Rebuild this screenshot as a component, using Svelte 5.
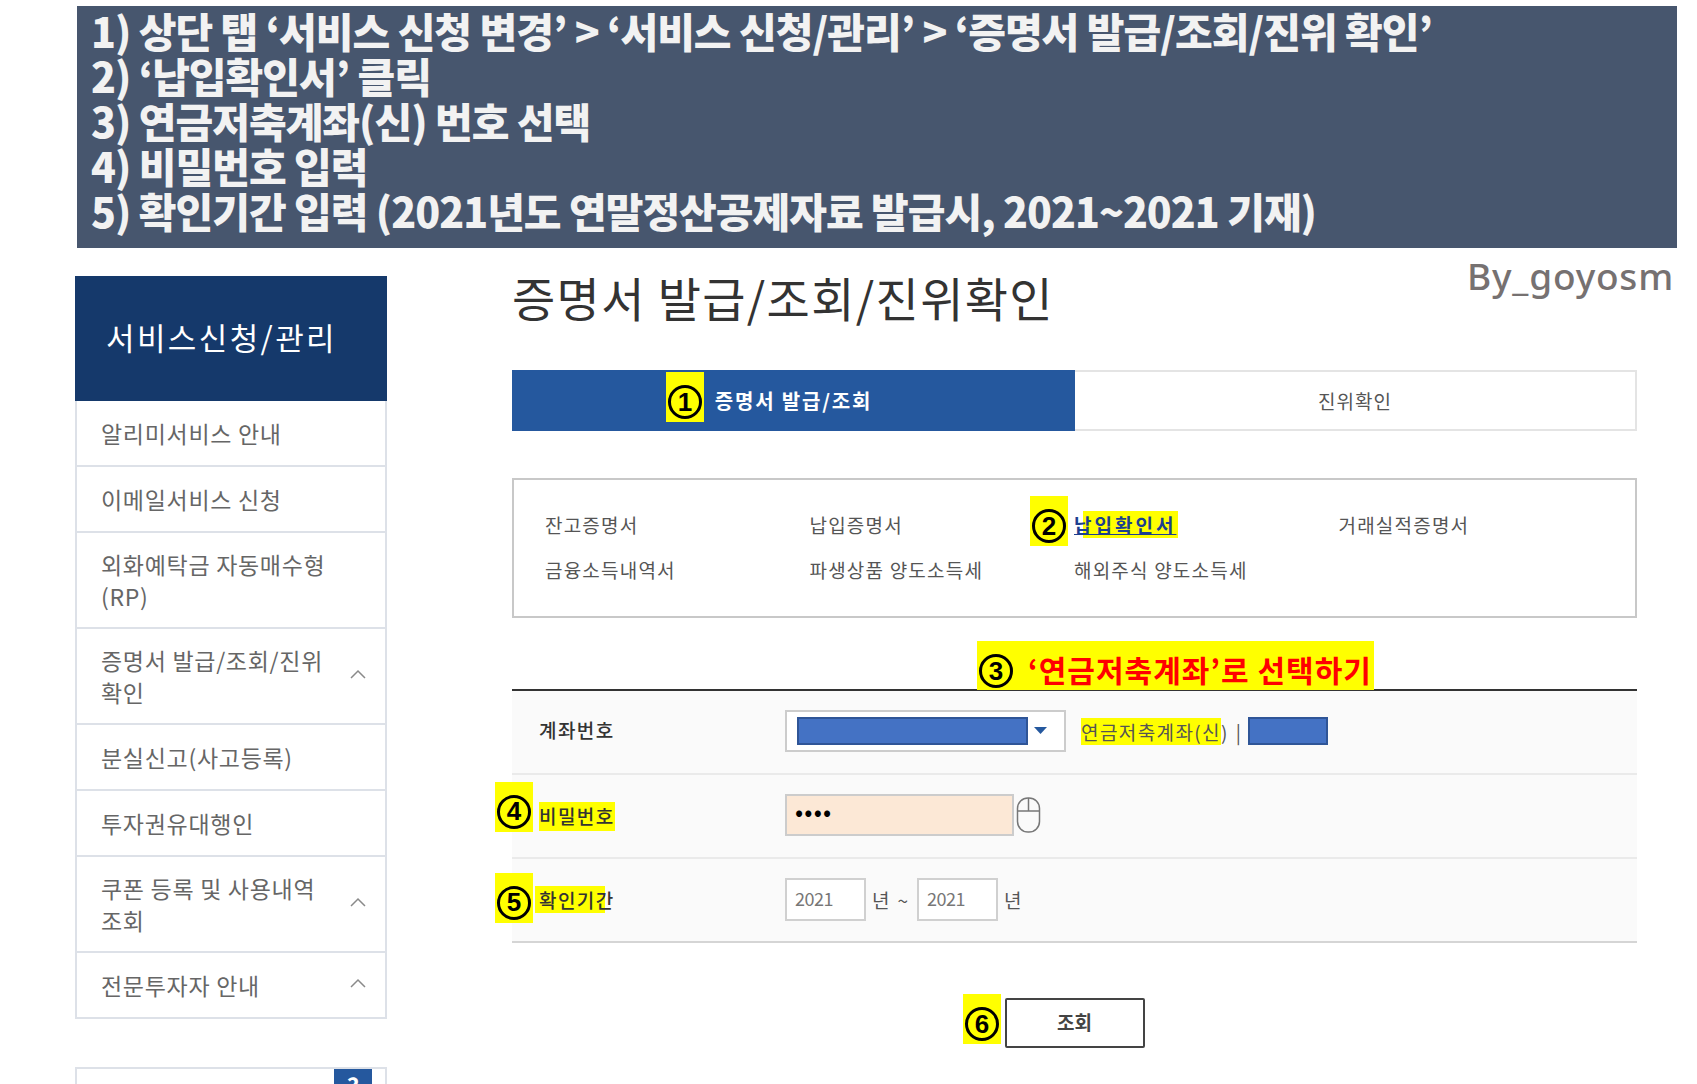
<script>
	const steps = [
		"1) 상단 탭 ‘서비스 신청 변경’ > ‘서비스 신청/관리’ > ‘증명서 발급/조회/진위 확인’",
		"2) ‘납입확인서’ 클릭",
		"3) 연금저축계좌(신) 번호 선택",
		"4) 비밀번호 입력",
		"5) 확인기간 입력 (2021년도 연말정산공제자료 발급시, 2021~2021 기재)"
	];

	const menu = [
		{ label: "알리미서비스 안내" },
		{ label: "이메일서비스 신청" },
		{ label: "외화예탁금 자동매수형 (RP)" },
		{ label: "증명서 발급/조회/진위 확인", open: true },
		{ label: "분실신고(사고등록)" },
		{ label: "투자권유대행인" },
		{ label: "쿠폰 등록 및 사용내역 조회", open: true },
		{ label: "전문투자자 안내", open: true }
	];

	const docs = [
		"잔고증명서",
		"납입증명서",
		"납입확인서",
		"거래실적증명서",
		"금융소득내역서",
		"파생상품 양도소득세",
		"해외주식 양도소득세"
	];
</script>

<div class="page">
	<div class="banner">
		{#each steps as step}
			<div>{step}</div>
		{/each}
	</div>

	<div class="content">
		<aside class="sidebar">
			<h2 class="side-title">서비스신청/관리</h2>
			<ul class="side-menu">
				{#each menu as item}
					<li class="side-item">
						<span class="side-label">{item.label}</span>
						{#if item.open}
							<svg class="chevron" width="16" height="10" viewBox="0 0 16 10">
								<path d="M1 9 L8 2 L15 9" fill="none" stroke="#8a8a8a" stroke-width="1.5" />
							</svg>
						{/if}
					</li>
				{/each}
			</ul>
			<div class="help-box"><span class="help-tab">?</span></div>
		</aside>

		<main class="main">
			<div class="title-row">
				<h1 class="title">증명서 발급/조회/진위확인</h1>
				<span class="credit">By_goyosm</span>
			</div>

			<div class="tabs">
				<div class="tab active">
					<span class="step step-tab"><i>1</i></span>
					<span class="tab-text">증명서 발급/조회</span>
				</div>
				<div class="tab">진위확인</div>
			</div>

			<div class="doc-box">
				{#each docs as doc, i}
					<div class="doc" class:picked={i === 2}>
						{#if i === 2}
							<span class="step step-doc"><i>2</i></span>
							<a href="#top" class="doc-link">{doc}</a>
						{:else}
							{doc}
						{/if}
					</div>
				{/each}
			</div>

			<div class="note">
				<span class="note-num"><i>3</i></span>
				<span class="note-text">‘연금저축계좌’로 선택하기</span>
			</div>

			<div class="form">
				<div class="form-row">
					<div class="form-label acct-label">계좌번호</div>
					<div class="form-field">
						<div class="select">
							<span class="mask mask-wide"></span>
							<svg width="13" height="8" viewBox="0 0 13 8"><path d="M0 0 H13 L6.5 7 Z" fill="#25589e" /></svg>
						</div>
						<span class="acct-name"><mark>연금저축계좌(신</mark>)</span>
						<span class="acct-sep">|</span>
						<span class="mask mask-short"></span>
					</div>
				</div>
				<div class="form-row">
					<div class="form-label">
						<span class="step step-row"><i>4</i></span>
						<mark class="label-mark">비밀번호</mark>
					</div>
					<div class="form-field">
						<div class="password">••••</div>
						<svg class="mouse" width="25" height="36" viewBox="0 0 25 36">
							<rect x="1.5" y="1" width="22" height="34" rx="10.5" fill="none" stroke="#777" stroke-width="1.5" />
							<path d="M1.5 14 H23.5 M12.5 1 V14" fill="none" stroke="#777" stroke-width="1.5" />
						</svg>
					</div>
				</div>
				<div class="form-row">
					<div class="form-label">
						<span class="step step-row step-five"><i>5</i></span>
						<mark class="period-mark">확인기간</mark>
					</div>
					<div class="form-field period">
						<div class="year">2021</div>
						<span class="unit">년</span>
						<span class="tilde">~</span>
						<div class="year">2021</div>
						<span class="unit">년</span>
					</div>
				</div>
			</div>

			<div class="actions">
				<span class="step step-btn"><i>6</i></span>
				<button class="search">조회</button>
			</div>
		</main>
	</div>
</div>

<style>
	:global(body) {
		margin: 0;
		background: #fff;
	}

	.page {
		width: 1697px;
		height: 1084px;
		overflow: hidden;
		padding-top: 6px;
		box-sizing: border-box;
		font-family: "Noto Sans CJK KR", "Noto Sans", sans-serif;
		color: #555;
	}

	.banner {
		margin-left: 77px;
		width: 1600px;
		height: 242px;
		box-sizing: border-box;
		padding: 2px 0 0 14px;
		background: #47566e;
		color: #f2f2f2;
		font-size: 41px;
		font-weight: 900;
		line-height: 45px;
		letter-spacing: -1px;
		white-space: nowrap;
	}

	.content {
		display: flex;
		margin-top: 28px;
		padding-left: 75px;
	}

	.sidebar {
		width: 312px;
		flex: none;
	}

	.side-title {
		margin: 0;
		height: 125px;
		box-sizing: border-box;
		display: flex;
		align-items: center;
		padding: 0 0 4px 31px;
		background: #15396b;
		color: #fff;
		font-size: 31px;
		font-weight: 400;
		letter-spacing: 2.4px;
	}

	.side-menu {
		list-style: none;
		margin: 0;
		padding: 0;
		border: 2px solid #dde1e8;
		border-top: 0;
	}

	.side-item {
		display: flex;
		align-items: center;
		justify-content: space-between;
		box-sizing: border-box;
		min-height: 66px;
		padding: 15px 19px 15px 24px;
		font-size: 23px;
		line-height: 32px;
		letter-spacing: 0.7px;
		color: #666;
		border-bottom: 2px solid #dde1e8;
	}

	.side-item:last-child {
		border-bottom: 0;
		min-height: 64px;
	}

	.side-label {
		max-width: 232px;
	}

	.chevron {
		flex: none;
		margin-bottom: 4px;
	}

	.help-box {
		margin-top: 48px;
		height: 60px;
		border: 2px solid #dde1e8;
		position: relative;
	}

	.help-tab {
		position: absolute;
		left: 257px;
		top: 0;
		width: 38px;
		height: 60px;
		text-align: center;
		background: #25589e;
		color: #fff;
		font-size: 24px;
		font-weight: 700;
		line-height: 34px;
	}

	.main {
		margin-left: 125px;
		width: 1125px;
		flex: none;
		position: relative;
	}

	.title-row {
		height: 94px;
	}

	.title {
		margin: 0;
		font-size: 47px;
		font-weight: 400;
		line-height: 42px;
		letter-spacing: 1.35px;
		color: #333;
	}

	.credit {
		position: absolute;
		top: -20px;
		right: -37px;
		font-family: "Noto Sans", sans-serif;
		font-size: 37px;
		font-weight: 500;
		line-height: 40px;
		letter-spacing: 0.8px;
		color: #767171;
	}

	.tabs {
		display: flex;
		height: 61px;
	}

	.tab {
		flex: 1;
		display: flex;
		align-items: center;
		justify-content: center;
		box-sizing: border-box;
		border: 2px solid #e4e4e4;
		border-left: 0;
		font-size: 19px;
		letter-spacing: 1px;
		color: #555;
	}

	.tab.active {
		flex: none;
		width: 563px;
		border: 0;
		background: #25589e;
		color: #fff;
		font-weight: 700;
		font-size: 20px;
		letter-spacing: 1.8px;
		position: relative;
	}

	.step {
		position: absolute;
		width: 38px;
		height: 50px;
		background: #ff0;
		display: flex;
		align-items: flex-end;
		justify-content: center;
		padding-bottom: 3px;
		box-sizing: border-box;
	}

	.step i,
	.note-num i {
		width: 34px;
		height: 34px;
		box-sizing: border-box;
		border: 3px solid #000;
		border-radius: 50%;
		display: flex;
		align-items: center;
		justify-content: center;
		font-family: "Liberation Sans", sans-serif;
		font-style: normal;
		font-weight: 700;
		font-size: 26px;
		color: #000;
		letter-spacing: 0;
	}

	.step-tab {
		left: 154px;
		top: 2px;
	}

	.doc-box {
		margin-top: 47px;
		height: 140px;
		box-sizing: border-box;
		border: 2px solid #c8c8c8;
		padding: 22px 0 0 31px;
		display: grid;
		grid-template-columns: repeat(4, 264.5px);
		grid-auto-rows: 45px;
		font-size: 19px;
		letter-spacing: 1.2px;
		color: #555;
		align-items: center;
	}

	.doc {
		position: relative;
		white-space: nowrap;
	}

	.doc-link {
		color: #1d3f8f;
		font-weight: 700;
		letter-spacing: 3px;
		text-decoration: underline;
		background: linear-gradient(#ff0, #ff0) no-repeat 9px 0 / 95px 100%;
		padding: 0 2px 0 0;
	}

	.step-doc {
		left: -44px;
		top: -15px;
	}

	.note {
		margin: 23px 0 -1px 465px;
		width: 397px;
		height: 49px;
		background: #ff0;
		display: flex;
		align-items: flex-end;
		gap: 15px;
		padding: 0 0 2px 2px;
		box-sizing: border-box;
		position: relative;
	}

	.note-text {
		font-size: 30px;
		font-weight: 700;
		line-height: 38px;
		color: #f00;
		letter-spacing: 1px;
		white-space: nowrap;
	}

	.form {
		border-top: 2px solid #333;
		border-bottom: 2px solid #d5d5d5;
		background: #fafafa;
	}

	.form-row {
		display: flex;
		align-items: center;
		box-sizing: border-box;
		height: 84px;
		padding-bottom: 2px;
		border-bottom: 2px solid #eaeaea;
	}

	.form-row:last-child {
		border-bottom: 0;
		height: 82px;
	}

	.form-label {
		position: relative;
		width: 273px;
		flex: none;
		box-sizing: border-box;
		padding-left: 27px;
		font-size: 19px;
		font-weight: 500;
		letter-spacing: 1.4px;
		color: #333;
	}

	.acct-label {
		padding-bottom: 4px;
	}

	.label-mark {
		background: #ff0;
		color: #333;
		padding-bottom: 2px;
	}

	.period-mark {
		background: linear-gradient(#ff0, #ff0) no-repeat 0 0 / 70px 100%;
		color: #333;
		margin-left: -4px;
		padding-left: 4px;
	}

	.step-row {
		left: -17px;
		top: -20px;
	}

	.step-five {
		top: -13px;
	}

	.form-field {
		display: flex;
		align-items: center;
	}

	.select {
		width: 281px;
		height: 42px;
		box-sizing: border-box;
		border: 2px solid #ccc;
		background: #fff;
		display: flex;
		align-items: center;
		gap: 6px;
		padding-left: 10px;
	}

	.mask {
		display: block;
		height: 28px;
		box-sizing: border-box;
		background: #4472c4;
		border: 2px solid #2f5597;
	}

	.mask-wide {
		width: 231px;
	}

	.mask-short {
		width: 80px;
	}

	.acct-name {
		margin-left: 15px;
		font-size: 19px;
		letter-spacing: 1.4px;
		color: #555;
	}

	.acct-name mark {
		background: #ff0;
		color: #555;
	}

	.acct-sep {
		margin: 0 7px;
		font-size: 19px;
		color: #555;
	}

	.password {
		width: 229px;
		height: 42px;
		box-sizing: border-box;
		border: 2px solid #ccc;
		background: #fce8d6;
		padding-left: 8px;
		font-size: 24px;
		line-height: 30px;
		color: #000;
		letter-spacing: 1.2px;
	}

	.mouse {
		margin-left: 2px;
	}

	.year {
		width: 81px;
		height: 43px;
		box-sizing: border-box;
		border: 2px solid #d0d0d0;
		background: #fff;
		padding-left: 8px;
		font-size: 18px;
		line-height: 36px;
		letter-spacing: -0.5px;
		color: #777;
	}

	.unit {
		margin: 0 6px;
		font-size: 19px;
		color: #555;
	}

	.tilde {
		margin: 0 9px 0 2px;
		font-size: 19px;
		color: #555;
	}

	.actions {
		position: relative;
		display: flex;
		justify-content: center;
		margin-top: 55px;
	}

	.search {
		width: 140px;
		height: 50px;
		box-sizing: border-box;
		border: 2px solid #444;
		border-radius: 2px;
		background: #fff;
		padding: 0 0 4px;
		font-family: inherit;
		font-size: 19px;
		font-weight: 700;
		color: #444;
	}

	.step-btn {
		left: 451px;
		top: -4px;
	}

	.note-num {
		display: flex;
	}
</style>
